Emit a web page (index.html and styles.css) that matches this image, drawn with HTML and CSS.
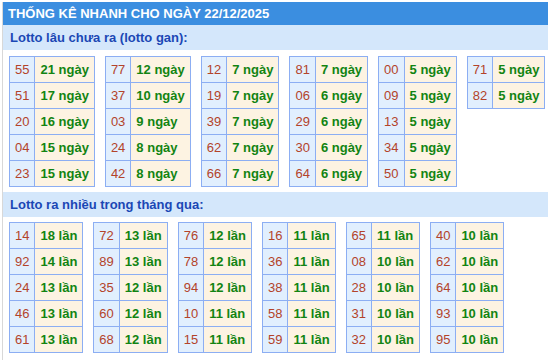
FILE: index.html
```html
<!DOCTYPE html>
<html lang="vi">
<head>
<meta charset="utf-8">
<link rel="stylesheet" href="styles.css">
</head>
<body>
<div class="box">
  <div class="head">THỐNG KÊ NHANH CHO NGÀY 22/12/2025</div>
  <div class="sec">Lotto lâu chưa ra (lotto gan):</div>
  <div class="grid g1">
    <table><tr><td class="n">55</td><td class="v">21 ngày</td></tr><tr><td class="n">51</td><td class="v">17 ngày</td></tr><tr><td class="n">20</td><td class="v">16 ngày</td></tr><tr><td class="n">04</td><td class="v">15 ngày</td></tr><tr><td class="n">23</td><td class="v">15 ngày</td></tr></table>
    <table><tr><td class="n">77</td><td class="v">12 ngày</td></tr><tr><td class="n">37</td><td class="v">10 ngày</td></tr><tr><td class="n">03</td><td class="v">9 ngày</td></tr><tr><td class="n">24</td><td class="v">8 ngày</td></tr><tr><td class="n">42</td><td class="v">8 ngày</td></tr></table>
    <table><tr><td class="n">12</td><td class="v">7 ngày</td></tr><tr><td class="n">19</td><td class="v">7 ngày</td></tr><tr><td class="n">39</td><td class="v">7 ngày</td></tr><tr><td class="n">62</td><td class="v">7 ngày</td></tr><tr><td class="n">66</td><td class="v">7 ngày</td></tr></table>
    <table><tr><td class="n">81</td><td class="v">7 ngày</td></tr><tr><td class="n">06</td><td class="v">6 ngày</td></tr><tr><td class="n">29</td><td class="v">6 ngày</td></tr><tr><td class="n">30</td><td class="v">6 ngày</td></tr><tr><td class="n">64</td><td class="v">6 ngày</td></tr></table>
    <table><tr><td class="n">00</td><td class="v">5 ngày</td></tr><tr><td class="n">09</td><td class="v">5 ngày</td></tr><tr><td class="n">13</td><td class="v">5 ngày</td></tr><tr><td class="n">34</td><td class="v">5 ngày</td></tr><tr><td class="n">50</td><td class="v">5 ngày</td></tr></table>
    <table><tr><td class="n">71</td><td class="v">5 ngày</td></tr><tr><td class="n">82</td><td class="v">5 ngày</td></tr></table>
  </div>
  <div class="sec">Lotto ra nhiều trong tháng qua:</div>
  <div class="grid g2">
    <table><tr><td class="n">14</td><td class="v">18 lần</td></tr><tr><td class="n">92</td><td class="v">14 lần</td></tr><tr><td class="n">24</td><td class="v">13 lần</td></tr><tr><td class="n">46</td><td class="v">13 lần</td></tr><tr><td class="n">61</td><td class="v">13 lần</td></tr></table>
    <table><tr><td class="n">72</td><td class="v">13 lần</td></tr><tr><td class="n">89</td><td class="v">13 lần</td></tr><tr><td class="n">35</td><td class="v">12 lần</td></tr><tr><td class="n">60</td><td class="v">12 lần</td></tr><tr><td class="n">68</td><td class="v">12 lần</td></tr></table>
    <table><tr><td class="n">76</td><td class="v">12 lần</td></tr><tr><td class="n">78</td><td class="v">12 lần</td></tr><tr><td class="n">94</td><td class="v">12 lần</td></tr><tr><td class="n">10</td><td class="v">11 lần</td></tr><tr><td class="n">15</td><td class="v">11 lần</td></tr></table>
    <table><tr><td class="n">16</td><td class="v">11 lần</td></tr><tr><td class="n">36</td><td class="v">11 lần</td></tr><tr><td class="n">38</td><td class="v">11 lần</td></tr><tr><td class="n">58</td><td class="v">11 lần</td></tr><tr><td class="n">59</td><td class="v">11 lần</td></tr></table>
    <table><tr><td class="n">65</td><td class="v">11 lần</td></tr><tr><td class="n">08</td><td class="v">10 lần</td></tr><tr><td class="n">28</td><td class="v">10 lần</td></tr><tr><td class="n">31</td><td class="v">10 lần</td></tr><tr><td class="n">32</td><td class="v">10 lần</td></tr></table>
    <table><tr><td class="n">40</td><td class="v">10 lần</td></tr><tr><td class="n">62</td><td class="v">10 lần</td></tr><tr><td class="n">64</td><td class="v">10 lần</td></tr><tr><td class="n">93</td><td class="v">10 lần</td></tr><tr><td class="n">95</td><td class="v">10 lần</td></tr></table>
  </div>
</div>
</body>
</html>
```
FILE: styles.css
```css
html, body { margin: 0; padding: 0; background: #fff; }
body { font-family: "Liberation Sans", Arial, sans-serif; }
.box {
  margin: 2px 0 0 2px;
  border-left: 1px solid #d8d8d8;
  min-height: 358px;
}
.head {
  background: #3b8ee0;
  color: #fff;
  font-weight: bold;
  font-size: 13px;
  height: 23px;
  line-height: 24px;
  padding-left: 5px;
}
.sec {
  background: #d4e7fb;
  color: #1b47b5;
  font-weight: bold;
  font-size: 13px;
  height: 25px;
  line-height: 25px;
  padding-left: 7px;
}
.grid {
  display: flex;
  align-items: flex-start;
  gap: 10px;
  padding: 6px 0 5px 6px;
}
.g2 { padding-bottom: 0; padding-top: 5px; }
table {
  border-collapse: collapse;
  font-size: 13px;
  flex-shrink: 0;
  white-space: nowrap;
}
td {
  border: 1px solid #8caef3;
  height: 25px;
  padding: 0 5px;
  line-height: 15px;
}
td.n {
  background: #e1effe;
  color: #b3432a;
  text-align: center;
}
td.v {
  background: #fdf3e2;
  color: #128412;
  font-weight: bold;
}
```
